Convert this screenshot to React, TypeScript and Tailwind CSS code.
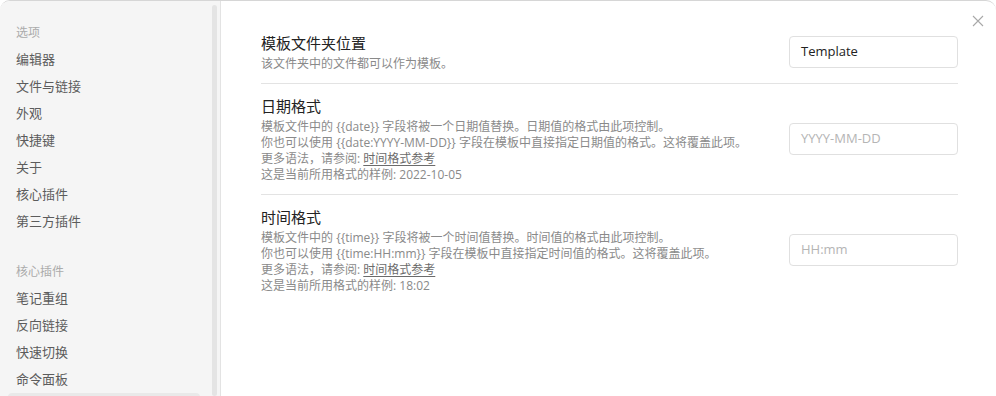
import type { ReactNode } from 'react'

const optionItems = ['编辑器', '文件与链接', '外观', '快捷键', '关于', '核心插件', '第三方插件']
const pluginItems = ['笔记重组', '反向链接', '快速切换', '命令面板']

const SideItem = ({ label, active }: { label?: string; active?: boolean }) => (
  <div
    className={`h-[27px] flex items-center px-2 rounded-[4px] text-[13px] text-[#5c5c5c] ${
      active ? 'bg-[#e9e9e9]' : ''
    }`}
  >
    {label}
  </div>
)

const SideHeader = ({ label }: { label: string }) => (
  <div className="h-[27px] flex items-center px-2 text-[12px] text-[#ababab]">{label}</div>
)

interface SettingRowProps {
  title: string
  children: ReactNode
  value?: string
  placeholder?: string
  first?: boolean
}

const SettingRow = ({ title, children, value, placeholder, first }: SettingRowProps) => (
  <div
    className={`flex items-center justify-between py-[11px] ${first ? '' : 'border-t border-[#e3e3e3]'}`}
  >
    <div className="flex flex-col">
      <div className="text-[15px] leading-[22px] text-[#222]">{title}</div>
      <div className="mt-[2px] text-[12px] leading-[16px] text-[#8a8a8a]">{children}</div>
    </div>
    {/* 입력창 */}
    <div className="w-[169px] h-[32px] flex items-center px-[11px] border border-[#e0e0e0] rounded-[4px] bg-white text-[13px] flex-shrink-0">
      {value ? (
        <span className="text-[#222]">{value}</span>
      ) : (
        <span className="text-[#b5b5b5]">{placeholder}</span>
      )}
    </div>
  </div>
)

const Link = ({ children }: { children: ReactNode }) => (
  <span className="underline text-[#6b6b6b] underline-offset-2">{children}</span>
)

export default function App() {
  return (
    <div
      className="w-[996px] h-[396px] bg-white overflow-hidden"
      style={{ fontFamily: '"Segoe UI", "Open Sans", "Noto Sans CJK SC", sans-serif' }}
    >
      <div className="h-full flex border-t border-[#d6d6d6] rounded-t-[10px] overflow-hidden">
        {/* 사이드바 */}
        <div className="relative w-[221px] flex-shrink-0 bg-[#f5f5f5] border-r border-[#e3e3e3]">
          <div className="pt-[18px] px-2 pr-[20px]">
            <SideHeader label="选项" />
            {optionItems.map((item) => (
              <SideItem key={item} label={item} />
            ))}
            <div className="mt-[23px]">
              <SideHeader label="核心插件" />
              {pluginItems.map((item) => (
                <SideItem key={item} label={item} />
              ))}
              {/* 선택된 항목 (화면 아래로 잘림) */}
              <SideItem active />
            </div>
          </div>
          {/* 스크롤바 */}
          <div className="absolute right-[3px] top-[4px] bottom-0 w-[5px] rounded-full bg-[#e4e4e4]" />
        </div>

        {/* 본문 */}
        <div className="relative flex-1 pl-[40px] pr-[38px] pt-[20px]">
          <button className="absolute right-[12px] top-[14px] w-[12px] h-[12px] text-[#a8a8a8]">
            <svg width="12" height="12" viewBox="0 0 12 12" fill="none">
              <path d="M1 1L11 11M11 1L1 11" stroke="currentColor" strokeWidth="1.1" />
            </svg>
          </button>

          <SettingRow title="模板文件夹位置" value="Template" first>
            该文件夹中的文件都可以作为模板。
          </SettingRow>

          <SettingRow title="日期格式" placeholder="YYYY-MM-DD">
            <div>模板文件中的 {'{{date}}'} 字段将被一个日期值替换。日期值的格式由此项控制。</div>
            <div>你也可以使用 {'{{date:YYYY-MM-DD}}'} 字段在模板中直接指定日期值的格式。这将覆盖此项。</div>
            <div>
              更多语法，请参阅: <Link>时间格式参考</Link>
            </div>
            <div>这是当前所用格式的样例: 2022-10-05</div>
          </SettingRow>

          <SettingRow title="时间格式" placeholder="HH:mm">
            <div>模板文件中的 {'{{time}}'} 字段将被一个时间值替换。时间值的格式由此项控制。</div>
            <div>你也可以使用 {'{{time:HH:mm}}'} 字段在模板中直接指定时间值的格式。这将覆盖此项。</div>
            <div>
              更多语法，请参阅: <Link>时间格式参考</Link>
            </div>
            <div>这是当前所用格式的样例: 18:02</div>
          </SettingRow>
        </div>
      </div>
    </div>
  )
}
